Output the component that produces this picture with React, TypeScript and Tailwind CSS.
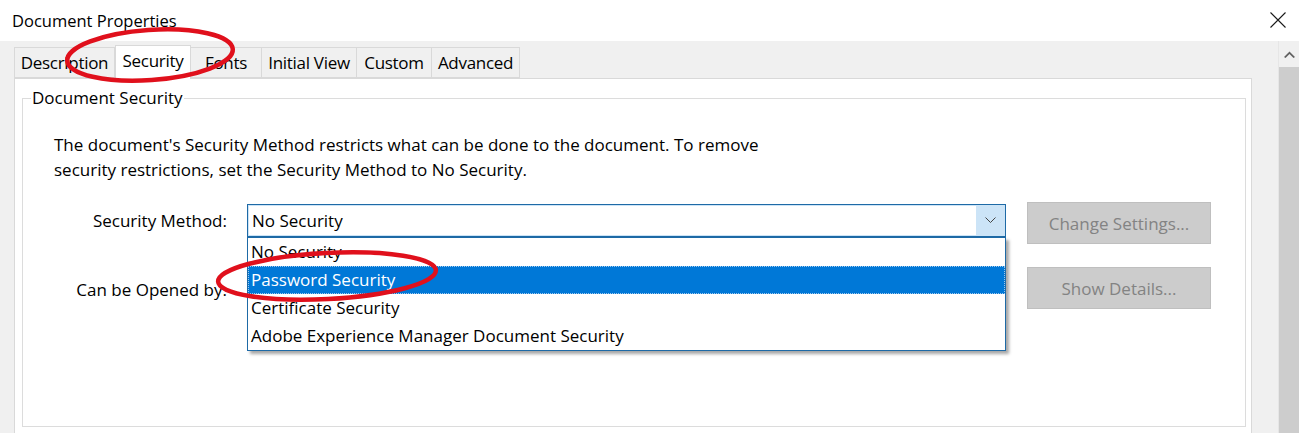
import React from 'react';

const font = { fontFamily: '"Open Sans", "Noto Sans", sans-serif' };

const tabs = ['Description', 'Security', 'Fonts', 'Initial View', 'Custom', 'Advanced'];
const tabWidths: Record<string, string> = {
    Description: 'w-[101px]',
    Security: 'w-[76px]',
    Fonts: 'w-[71px]',
    'Initial View': 'w-[95px]',
    Custom: 'w-[75px]',
    Advanced: 'w-[88px]',
};

const options = [
    'No Security',
    'Password Security',
    'Certificate Security',
    'Adobe Experience Manager Document Security',
];

export default function App() {
    return (
        <div
            className="relative w-[1299px] h-[433px] overflow-hidden bg-[#f0f0f0] text-black text-[17px]"
            style={font}
        >
            {/* Title bar */}
            <div className="h-[41px] bg-white flex items-center justify-between pl-[12px] pr-[13px]">
                <span className="text-[16.5px] leading-none pt-[1px]">Document Properties</span>
                <svg width="16" height="16" viewBox="0 0 16 16" className="mt-[-1px]">
                    <path d="M0.5 0.5 L15.5 15.5 M15.5 0.5 L0.5 15.5" stroke="#1a1a1a" strokeWidth="1.1" />
                </svg>
            </div>

            <div className="flex h-[392px]">
                {/* Main area */}
                <div className="flex-1 pl-[14px] pr-[26px] pt-[4px] flex flex-col">
                    {/* Tabs */}
                    <div className="flex items-end h-[33px] tracking-[-0.3px]">
                        {tabs.map(t =>
                            t === 'Security' ? (
                                <div
                                    key={t}
                                    className={`${tabWidths[t]} h-[34px] mb-[-1px] bg-white border border-b-0 border-[#d9d9d9] flex items-center justify-center pb-[3px] relative z-10`}
                                >
                                    {t}
                                </div>
                            ) : (
                                <div
                                    key={t}
                                    className={`${tabWidths[t]} h-[31px] bg-[#f0f0f0] border border-[#d9d9d9] border-l-0 first:border-l flex items-center justify-center pt-[1px]`}
                                >
                                    {t}
                                </div>
                            )
                        )}
                    </div>

                    {/* Panel */}
                    <div className="flex-1 bg-white border border-[#d9d9d9] border-b-0 pl-[7px] pr-[5px] pt-[9px]">
                        <fieldset className="border border-[#dcdcdc] h-[339px]">
                            <legend className="ml-[8px] px-[1px] leading-[20px]">Document Security</legend>

                            <div className="pl-[31px] pr-[34px]">
                                <p className="mt-[24px] leading-[25px]">
                                    The document&apos;s Security Method restricts what can be done to the document. To remove
                                    <br />
                                    security restrictions, set the Security Method to No Security.
                                </p>

                                <div className="mt-[20px] flex items-start">
                                    <div className="w-[173px] h-[33px] mt-[2px] flex items-center justify-end pt-[1px]">
                                        Security Method:
                                    </div>
                                    <div className="ml-[20px] mt-[2px] relative w-[759px] h-[33px] border border-[#1e6aa6] bg-[#cce4f7] p-[1px] flex">
                                        <div className="flex-1 bg-white flex items-center pl-[3px]">No Security</div>
                                        <div className="w-[28px] flex items-center justify-center">
                                            <svg width="11" height="7" viewBox="0 0 11 7">
                                                <path d="M0.5 0.5 L5.5 5.5 L10.5 0.5" fill="none" stroke="#444" strokeWidth="1" />
                                            </svg>
                                        </div>

                                        {/* Open list */}
                                        <div className="absolute left-[-1px] top-[32px] w-[759px] bg-white border border-[#1e6aa6] shadow-[3px_3px_3px_rgba(0,0,0,0.35)] z-20">
                                            {options.map((o, i) => (
                                                <div
                                                    key={o}
                                                    className={`h-[28px] flex items-center pl-[3px] ${
                                                        i === 1
                                                            ? 'bg-[#0078d7] text-white outline outline-1 outline-dotted outline-[#9cc8ee] -outline-offset-1'
                                                            : ''
                                                    }`}
                                                >
                                                    {o}
                                                </div>
                                            ))}
                                        </div>
                                    </div>
                                    <button className="ml-[21px] w-[184px] h-[42px] pt-[2px] bg-[#cccccc] border border-[#bfbfbf] text-[#838383]">
                                        Change Settings...
                                    </button>
                                </div>

                                <div className="mt-[23px] flex items-center">
                                    <div className="w-[176px] ml-[-3px] text-right pt-[3px]">Can be Opened by:</div>
                                    <div className="ml-[20px] w-[759px] h-[33px]" />
                                    <button className="ml-[21px] w-[184px] h-[42px] pt-[2px] bg-[#cccccc] border border-[#bfbfbf] text-[#838383]">
                                        Show Details...
                                    </button>
                                </div>
                            </div>
                        </fieldset>
                    </div>
                </div>

                {/* Scrollbar */}
                <div className="w-[21px] flex flex-col border-l border-[#e6e6e6]">
                    <div className="h-[26px] bg-[#f0f0f0] flex items-center justify-center">
                        <svg width="11" height="7" viewBox="0 0 11 7">
                            <path d="M0 6 L5.5 0.5 L11 6 L9.5 7 L5.5 3 L1.5 7 Z" fill="#606060" />
                        </svg>
                    </div>
                    <div className="flex-1 bg-[#cdcdcd]" />
                </div>
            </div>

            {/* Red annotation ellipses */}
            <svg className="absolute inset-0 pointer-events-none z-30" width="1299" height="433">
                <ellipse cx="150" cy="55" rx="83" ry="25" fill="none" stroke="#e0101c" strokeWidth="4.5" transform="rotate(-4 150 55)" />
                <ellipse cx="327" cy="276" rx="109" ry="23" fill="none" stroke="#e0101c" strokeWidth="4.5" transform="rotate(-3 327 276)" />
            </svg>
        </div>
    );
}
